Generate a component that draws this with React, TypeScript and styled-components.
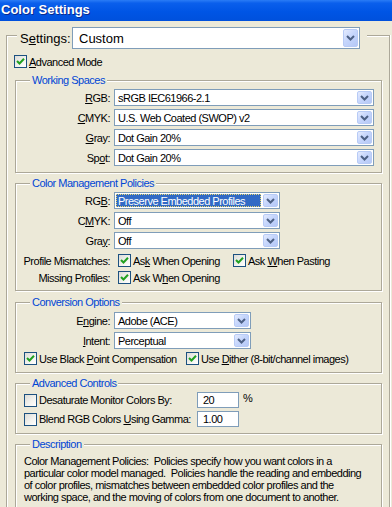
import React from "react";
import styled, { createGlobalStyle } from "styled-components";

const GlobalStyle = createGlobalStyle`
  html, body {
    margin: 0;
    padding: 0;
    background: #ece9d8;
  }
  body {
    font-family: "Liberation Sans", Arial, sans-serif;
    font-size: 11px;
    letter-spacing: -0.5px;
    color: #000;
  }
`;

// Window chrome
const Window = styled.div`
  width: 392px;
  height: 507px;
  overflow: hidden;
  background: #ece9d8;
`;

const TitleBar = styled.div`
  height: 21px;
  box-sizing: border-box;
  padding: 0 0 3px 1px;
  display: flex;
  align-items: center;
  background: linear-gradient(to bottom, #2a7cf6 0%, #0a5fec 15%, #0055e5 55%, #0050dc 100%);
  color: #fff;
  font-size: 13px;
  font-weight: bold;
  letter-spacing: 0;
  text-shadow: 1px 1px 0 #0b2a8c;
`;

// Group boxes
const OuterBox = styled.div`
  margin: 14px 2px 0 6px;
  padding: 0 0 40px 8px;
  border: 1px solid #aca899;
  border-bottom: none;
  box-shadow: 1px 0 0 #fff, inset 1px 1px 0 #fff;
`;

const SettingsRow = styled.div`
  display: flex;
  align-items: center;
  width: fit-content;
  margin: -9px 0 0 2px;
  padding: 0 7px 0 3px;
  background: #ece9d8;
  font-size: 13px;
  letter-spacing: 0;
`;

const SettingsLabel = styled.span`
  flex: 0 0 52px;
`;

const Group = styled.div<{ $gap?: number; $bottom?: number }>`
  width: 367px;
  box-sizing: border-box;
  margin-top: ${(p) => p.$gap ?? 10}px;
  padding-bottom: ${(p) => p.$bottom ?? 6}px;
  border: 1px solid #aca899;
  box-shadow: 1px 1px 0 #fff, inset 1px 1px 0 #fff;
`;

const Caption = styled.div`
  width: fit-content;
  margin: -7px 0 0 14px;
  padding: 0 2px;
  line-height: 13px;
  background: #ece9d8;
  color: #0046d5;
`;

// Form layout
const FormGrid = styled.div<{ $top?: number }>`
  display: grid;
  grid-template-columns: 94px max-content;
  grid-auto-rows: 17px;
  column-gap: 4px;
  row-gap: 3px;
  align-items: center;
  margin-top: ${(p) => p.$top ?? 2}px;
`;

const FieldLabel = styled.span`
  justify-self: end;
  white-space: nowrap;
`;

const CheckGrid = styled.div`
  display: grid;
  grid-template-columns: 94px 115px auto;
  grid-auto-rows: 13px;
  row-gap: 4px;
  align-items: center;
  margin-top: 5px;
`;

const CheckCell = styled.div`
  margin-left: 8px;
`;

const CheckRow = styled.div<{ $top?: number; $left?: number }>`
  display: flex;
  align-items: center;
  margin: ${(p) => p.$top ?? 3}px 0 0 ${(p) => p.$left ?? 8}px;
`;

const CheckWide = styled.div`
  width: 162px;
`;

const AdvGrid = styled.div`
  display: grid;
  grid-template-columns: 173px 42px auto;
  grid-auto-rows: 16px;
  row-gap: 3px;
  column-gap: 0;
  align-items: center;
  margin: 2px 0 0 8px;
`;

const Percent = styled.span`
  margin-left: 4px;
  align-self: start;
`;

// Controls
const ComboBox = styled.div<{ $w: number; $h?: number; $big?: boolean }>`
  width: ${(p) => p.$w}px;
  height: ${(p) => p.$h ?? 17}px;
  box-sizing: border-box;
  display: flex;
  padding: 1px;
  border: 1px solid #7f9db9;
  background: #fff;
  font-size: ${(p) => (p.$big ? 13 : 11)}px;
  letter-spacing: ${(p) => (p.$big ? 0 : -0.5)}px;
`;

const ComboValue = styled.div<{ $selected?: boolean; $big?: boolean }>`
  flex: 1;
  display: flex;
  align-items: center;
  padding-left: ${(p) => (p.$big ? 5 : 2)}px;
  white-space: nowrap;
  overflow: hidden;
  ${(p) =>
    p.$selected &&
    `
    background: #316ac5;
    color: #fff;
    outline: 1px dotted #e8d870;
    outline-offset: -1px;
    margin-right: 2px;
  `}
`;

const ComboButton = styled.div`
  flex: 0 0 15px;
  box-sizing: border-box;
  display: flex;
  align-items: center;
  justify-content: center;
  border: 1px solid #b8cbf6;
  border-radius: 2px;
  background: linear-gradient(135deg, #e4ebfe 0%, #c6d6fc 45%, #b5c8f6 100%);
`;

const Chevron = () => (
  <svg width="9" height="6" viewBox="0 0 9 6">
    <polyline points="1,1 4.5,4.5 8,1" fill="none" stroke="#4d6185" strokeWidth="2" />
  </svg>
);

const Combo: React.FC<{ w: number; h?: number; big?: boolean; selected?: boolean; children: React.ReactNode }> = ({
  w,
  h,
  big,
  selected,
  children,
}) => (
  <ComboBox $w={w} $h={h} $big={big}>
    <ComboValue $selected={selected} $big={big}>
      {children}
    </ComboValue>
    <ComboButton>
      <Chevron />
    </ComboButton>
  </ComboBox>
);

const TextBox = styled.div`
  width: 42px;
  height: 16px;
  box-sizing: border-box;
  display: flex;
  align-items: center;
  padding-left: 5px;
  border: 1px solid #7f9db9;
  background: #fff;
`;

const CheckLabel = styled.label`
  display: flex;
  align-items: center;
  gap: 2px;
  white-space: nowrap;
`;

const Box = styled.span`
  width: 13px;
  height: 13px;
  box-sizing: border-box;
  display: inline-flex;
  align-items: center;
  justify-content: center;
  border: 1px solid #1c5180;
  background: linear-gradient(135deg, #dcdcd7 0%, #f4f4f0 60%, #ffffff 100%);
`;

const CheckBox: React.FC<{ checked?: boolean; children: React.ReactNode }> = ({ checked, children }) => (
  <CheckLabel>
    <Box>
      {checked && (
        <svg width="9" height="9" viewBox="0 0 9 9">
          <polyline points="1,4 3.5,6.5 8,1.8" fill="none" stroke="#21a121" strokeWidth="2" />
        </svg>
      )}
    </Box>
    <span>{children}</span>
  </CheckLabel>
);

const Description = styled.div`
  margin: 4px 0 0 8px;
  line-height: 12px;
  white-space: pre;
`;

const App: React.FC = () => {
  return (
    <Window>
      <GlobalStyle />
      <TitleBar>Color Settings</TitleBar>

      <OuterBox>
        <SettingsRow>
          <SettingsLabel>
            S<u>e</u>ttings:
          </SettingsLabel>
          <Combo w={288} h={22} big>
            Custom
          </Combo>
        </SettingsRow>

        <CheckRow $top={6} $left={-1}>
          <CheckBox checked>
            <u>A</u>dvanced Mode
          </CheckBox>
        </CheckRow>

        <Group $gap={12}>
          <Caption>Working Spaces</Caption>
          <FormGrid>
            <FieldLabel>
              <u>R</u>GB:
            </FieldLabel>
            <Combo w={260}>sRGB IEC61966-2.1</Combo>
            <FieldLabel>
              <u>C</u>MYK:
            </FieldLabel>
            <Combo w={260}>U.S. Web Coated (SWOP) v2</Combo>
            <FieldLabel>
              <u>G</u>ray:
            </FieldLabel>
            <Combo w={260}>Dot Gain 20%</Combo>
            <FieldLabel>
              Sp<u>o</u>t:
            </FieldLabel>
            <Combo w={260}>Dot Gain 20%</Combo>
          </FormGrid>
        </Group>

        <Group>
          <Caption>Color Management Policies</Caption>
          <FormGrid>
            <FieldLabel>
              RG<u>B</u>:
            </FieldLabel>
            <Combo w={166} selected>
              Preserve Embedded Profiles
            </Combo>
            <FieldLabel>
              C<u>M</u>YK:
            </FieldLabel>
            <Combo w={166}>Off</Combo>
            <FieldLabel>
              Gra<u>y</u>:
            </FieldLabel>
            <Combo w={166}>Off</Combo>
          </FormGrid>
          <CheckGrid>
            <FieldLabel>Profile Mismatches:</FieldLabel>
            <CheckCell>
              <CheckBox checked>
                As<u>k</u> When Opening
              </CheckBox>
            </CheckCell>
            <CheckCell>
              <CheckBox checked>
                Ask <u>W</u>hen Pasting
              </CheckBox>
            </CheckCell>
            <FieldLabel>Missing Profiles:</FieldLabel>
            <CheckCell>
              <CheckBox checked>
                Ask W<u>h</u>en Opening
              </CheckBox>
            </CheckCell>
          </CheckGrid>
        </Group>

        <Group $gap={11} $bottom={7}>
          <Caption>Conversion Options</Caption>
          <FormGrid $top={3}>
            <FieldLabel>
              E<u>n</u>gine:
            </FieldLabel>
            <Combo w={137}>Adobe (ACE)</Combo>
            <FieldLabel>
              <u>I</u>ntent:
            </FieldLabel>
            <Combo w={137}>Perceptual</Combo>
          </FormGrid>
          <CheckRow>
            <CheckWide>
              <CheckBox checked>
                Use Black <u>P</u>oint Compensation
              </CheckBox>
            </CheckWide>
            <CheckBox checked>
              Use <u>D</u>ither (8-bit/channel images)
            </CheckBox>
          </CheckRow>
        </Group>

        <Group>
          <Caption>Advanced Controls</Caption>
          <AdvGrid>
            <CheckBox>Desaturate Monitor Colors By:</CheckBox>
            <TextBox>20</TextBox>
            <Percent>%</Percent>
            <CheckBox>
              Blend RGB Colors <u>U</u>sing Gamma:
            </CheckBox>
            <TextBox>1.00</TextBox>
          </AdvGrid>
        </Group>

        <Group>
          <Caption>Description</Caption>
          <Description>
            {"Color Management Policies:  Policies specify how you want colors in a\n" +
              "particular color model managed.  Policies handle the reading and embedding\n" +
              "of color profiles, mismatches between embedded color profiles and the\n" +
              "working space, and the moving of colors from one document to another."}
          </Description>
        </Group>
      </OuterBox>
    </Window>
  );
};

export default App;
